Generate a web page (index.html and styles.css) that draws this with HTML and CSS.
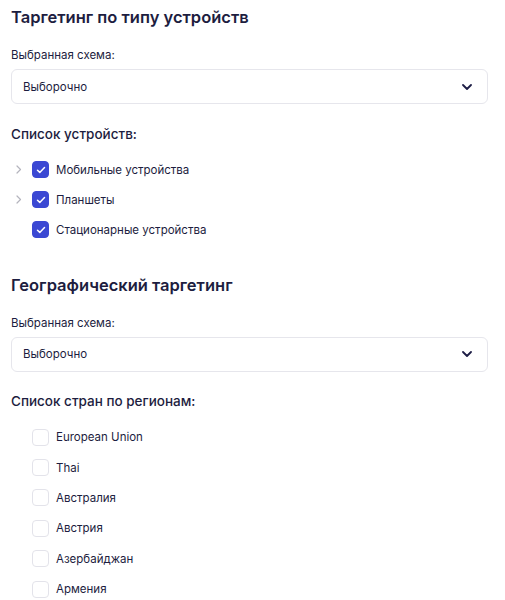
FILE: index.html
```html
<!DOCTYPE html>
<html lang="ru">
<head>
<meta charset="utf-8">
<link rel="stylesheet" href="styles.css">
</head>
<body>
<main class="page">
  <section class="block">
    <h2 class="block-title">Таргетинг по типу устройств</h2>
    <div class="field">
      <div class="field-label">Выбранная схема:</div>
      <div class="select">
        <span class="select-value">Выборочно</span>
        <svg class="select-arrow" width="10" height="6" viewBox="0 0 10 6"><path d="M1 1l4 4 4-4" fill="none" stroke="#1d1d45" stroke-width="1.8" stroke-linecap="round" stroke-linejoin="round"/></svg>
      </div>
    </div>
    <h3 class="list-title">Список устройств:</h3>
    <ul class="tree">
      <li class="tree-row">
        <span class="expander"><svg width="6" height="9" viewBox="0 0 6 9"><path d="M1 1l3.5 3.5L1 8" fill="none" stroke="#b4b4bd" stroke-width="1.2" stroke-linecap="round" stroke-linejoin="round"/></svg></span>
        <span class="check checked"><svg width="10" height="8" viewBox="0 0 10 8"><path d="M1.5 4.2l2.3 2.2L8.5 1.6" fill="none" stroke="#fff" stroke-width="1.5" stroke-linecap="round" stroke-linejoin="round"/></svg></span>
        <span class="tree-text">Мобильные устройства</span>
      </li>
      <li class="tree-row">
        <span class="expander"><svg width="6" height="9" viewBox="0 0 6 9"><path d="M1 1l3.5 3.5L1 8" fill="none" stroke="#b4b4bd" stroke-width="1.2" stroke-linecap="round" stroke-linejoin="round"/></svg></span>
        <span class="check checked"><svg width="10" height="8" viewBox="0 0 10 8"><path d="M1.5 4.2l2.3 2.2L8.5 1.6" fill="none" stroke="#fff" stroke-width="1.5" stroke-linecap="round" stroke-linejoin="round"/></svg></span>
        <span class="tree-text">Планшеты</span>
      </li>
      <li class="tree-row">
        <span class="expander"></span>
        <span class="check checked"><svg width="10" height="8" viewBox="0 0 10 8"><path d="M1.5 4.2l2.3 2.2L8.5 1.6" fill="none" stroke="#fff" stroke-width="1.5" stroke-linecap="round" stroke-linejoin="round"/></svg></span>
        <span class="tree-text">Стационарные устройства</span>
      </li>
    </ul>
  </section>

  <section class="block block-geo">
    <h2 class="block-title">Географический таргетинг</h2>
    <div class="field">
      <div class="field-label">Выбранная схема:</div>
      <div class="select">
        <span class="select-value">Выборочно</span>
        <svg class="select-arrow" width="10" height="6" viewBox="0 0 10 6"><path d="M1 1l4 4 4-4" fill="none" stroke="#1d1d45" stroke-width="1.8" stroke-linecap="round" stroke-linejoin="round"/></svg>
      </div>
    </div>
    <h3 class="list-title">Список стран по регионам:</h3>
    <ul class="tree tree-geo">
      <li class="tree-row"><span class="expander"></span><span class="check"></span><span class="tree-text">European Union</span></li>
      <li class="tree-row"><span class="expander"></span><span class="check"></span><span class="tree-text">Thai</span></li>
      <li class="tree-row"><span class="expander"></span><span class="check"></span><span class="tree-text">Австралия</span></li>
      <li class="tree-row"><span class="expander"></span><span class="check"></span><span class="tree-text">Австрия</span></li>
      <li class="tree-row"><span class="expander"></span><span class="check"></span><span class="tree-text">Азербайджан</span></li>
      <li class="tree-row"><span class="expander"></span><span class="check"></span><span class="tree-text">Армения</span></li>
    </ul>
  </section>
</main>
</body>
</html>
```

FILE: styles.css
```css
* { box-sizing: border-box; }

html, body {
  margin: 0;
  padding: 0;
  background: #ffffff;
}

body {
  font-family: Inter, "Noto Sans", sans-serif;
  color: #1d1d40;
  overflow: hidden;
}

.page {
  width: 477px;
  margin-left: 11px;
  padding-top: 7px;
}

.block-title {
  margin: 0;
  font-size: 16.5px;
  line-height: 20px;
  font-weight: 600;
}

.field {
  margin-top: 20px;
}

.field-label {
  font-size: 11.5px;
  line-height: 16px;
  font-weight: 400;
}

.select {
  margin-top: 6px;
  height: 35px;
  border: 1px solid #e6e6ec;
  border-radius: 6px;
  display: flex;
  align-items: center;
  justify-content: space-between;
  padding: 0 15px 0 11px;
}

.select-value {
  font-size: 11.5px;
  line-height: 16px;
}

.select-arrow {
  display: block;
}

.list-title {
  margin: 19.5px 0 0;
  font-size: 13.5px;
  line-height: 20px;
  font-weight: 500;
}

.tree {
  list-style: none;
  margin: 11px 0 0;
  padding: 0;
}

.tree-row {
  display: flex;
  align-items: center;
  height: 30px;
}

.tree-geo .tree-row {
  height: 30.4px;
}

.expander {
  width: 21px;
  display: flex;
  align-items: center;
  padding-left: 5px;
}

.expander svg { display: block; }

.check {
  width: 17px;
  height: 17px;
  border-radius: 4px;
  border: 1px solid #e3e3ea;
  background: #fff;
  display: flex;
  align-items: center;
  justify-content: center;
}

.check.checked {
  background: #3b48d3;
  border-color: #3b48d3;
}

.check svg { display: block; }

.tree-text {
  margin-left: 7px;
  font-size: 11.5px;
  line-height: 16px;
}

.block-geo {
  margin-top: 30px;
}
```
